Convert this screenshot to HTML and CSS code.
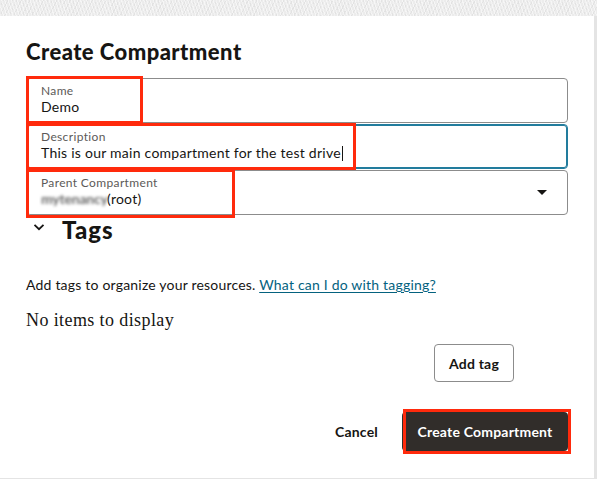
FILE: index.html
```html
<!DOCTYPE html>
<html lang="en">
<head>
<meta charset="utf-8">
<title>Create Compartment</title>
<link rel="stylesheet" href="styles.css">
</head>
<body>
<div class="backdrop"></div>
<div class="panel">
  <h1 class="title">Create Compartment</h1>
  <div class="fields">
    <div class="field">
      <div class="label">Name</div>
      <div class="value">Demo</div>
      <div class="mark mark-name"></div>
    </div>
    <div class="field focused">
      <div class="label">Description</div>
      <div class="value">This is our main compartment for the test drive<span class="caret"></span></div>
      <div class="mark mark-desc"></div>
    </div>
    <div class="field select">
      <div class="label">Parent Compartment</div>
      <div class="value"><span class="redacted">mytenancy</span>(root)</div>
      <svg class="arrow" width="10" height="6" viewBox="0 0 10 6"><path d="M0 0h10L5 5z" fill="#161513"/></svg>
      <div class="mark mark-parent"></div>
    </div>
  </div>
  <div class="tags-head">
    <svg class="chev" width="12" height="8" viewBox="0 0 12 8"><path d="M1.5 1.8 6 6.2 10.5 1.8" fill="none" stroke="#161513" stroke-width="1.8"/></svg>
    <h2 class="tags-title">Tags</h2>
  </div>
  <p class="help">Add tags to organize your resources. <a class="link" href="#">What can I do with tagging?</a></p>
  <p class="empty">No items to display</p>
  <div class="tag-actions">
    <button class="btn btn-outline">Add tag</button>
  </div>
  <div class="footer">
    <button class="btn btn-link">Cancel</button>
    <div class="primary-wrap">
      <button class="btn btn-primary">Create Compartment</button>
      <div class="mark mark-btn"></div>
    </div>
  </div>
</div>
</body>
</html>
```

FILE: styles.css
```css
* { box-sizing: border-box; }

html, body {
  margin: 0;
  padding: 0;
}

body {
  width: 597px;
  height: 479px;
  overflow: hidden;
  background: #e4e4e4;
  font-family: Lato, "Liberation Sans", sans-serif;
  color: #161513;
}

.backdrop {
  height: 16px;
  background-color: #ececec;
  background-image:
    repeating-linear-gradient(72deg, rgba(255,255,255,0.55) 0 1px, transparent 1px 3px),
    repeating-linear-gradient(-64deg, rgba(220,220,220,0.6) 0 1px, transparent 1px 4px);
}

.panel {
  width: 594px;
  height: 462px;
  background: #fff;
  padding: 0 0 0 26px;
  display: flex;
  flex-direction: column;
}

.title {
  margin: 23px 0 0;
  font-size: 22px;
  line-height: 26px;
  font-weight: 900;
  letter-spacing: 0.45px;
}

.fields {
  margin-top: 13px;
  width: 542px;
  display: flex;
  flex-direction: column;
  gap: 1px;
}

.field {
  position: relative;
  height: 45px;
  border: 1px solid #8c8c8c;
  border-radius: 4px;
  padding: 5px 14px 0 14px;
}

.field.focused {
  border-color: #227c9d;
  box-shadow: inset 0 0 0 1px #227c9d;
}

.label {
  font-size: 12px;
  line-height: 14px;
  color: #5c5a58;
  letter-spacing: 0.35px;
}

.value {
  font-size: 14px;
  line-height: 18px;
  color: #161513;
  white-space: nowrap;
  letter-spacing: 0.25px;
}

.caret {
  display: inline-block;
  width: 1px;
  height: 15px;
  background: #161513;
  vertical-align: -3px;
  margin-left: 1px;
}

.redacted {
  display: inline-block;
  width: 66px;
  vertical-align: top;
  color: #6a6a6a;
  font-weight: 700;
  filter: blur(1.4px);
  letter-spacing: -0.2px;
}

.arrow {
  position: absolute;
  right: 20px;
  top: 19px;
}

.mark {
  position: absolute;
  border: 3px solid #ff2a0c;
  pointer-events: none;
}

.mark-name { left: -1px; top: -3px; width: 117px; height: 48px; }
.mark-desc { left: -1px; top: -2px; width: 330px; height: 47px; }
.mark-parent { left: -1px; top: -2px; width: 209px; height: 49px; }

.tags-head {
  margin-top: 1px;
  display: flex;
  align-items: center;
  height: 28px;
}

.chev {
  margin-left: 7px;
  margin-top: -6px;
}

.tags-title {
  margin: 0 0 0 17px;
  font-size: 24px;
  line-height: 28px;
  font-weight: 900;
  letter-spacing: 1px;
}

.help {
  margin: 31px 0 0;
  font-size: 14px;
  line-height: 20px;
  letter-spacing: 0.2px;
}

.link {
  color: #04627f;
  text-decoration: underline;
  text-underline-offset: 2px;
}

.empty {
  margin: 14px 0 0;
  font-family: "Liberation Serif", serif;
  font-size: 18px;
  line-height: 22px;
  letter-spacing: 0.4px;
}

.tag-actions {
  width: 542px;
  margin-top: 13px;
  display: flex;
  justify-content: flex-end;
  padding-right: 54px;
}

.btn {
  font-family: Lato, "Liberation Sans", sans-serif;
  font-size: 14px;
  font-weight: 700;
  color: #161513;
  border-radius: 4px;
  cursor: pointer;
  letter-spacing: 0.2px;
}

.btn-outline {
  width: 80px;
  height: 38px;
  background: #fff;
  border: 1px solid #8c8c8c;
  padding: 0;
}

.footer {
  width: 542px;
  margin-top: 30px;
  display: flex;
  justify-content: flex-end;
  align-items: center;
  gap: 8px;
}

.btn-link {
  background: transparent;
  border: none;
  height: 39px;
  padding: 0 16px;
}

.primary-wrap {
  position: relative;
}

.btn-primary {
  display: block;
  width: 166px;
  height: 39px;
  background: #312d2a;
  color: #fff;
  border: none;
  padding: 0;
}

.mark-btn { left: 1px; top: -3px; right: -3px; bottom: -3px; }
```
